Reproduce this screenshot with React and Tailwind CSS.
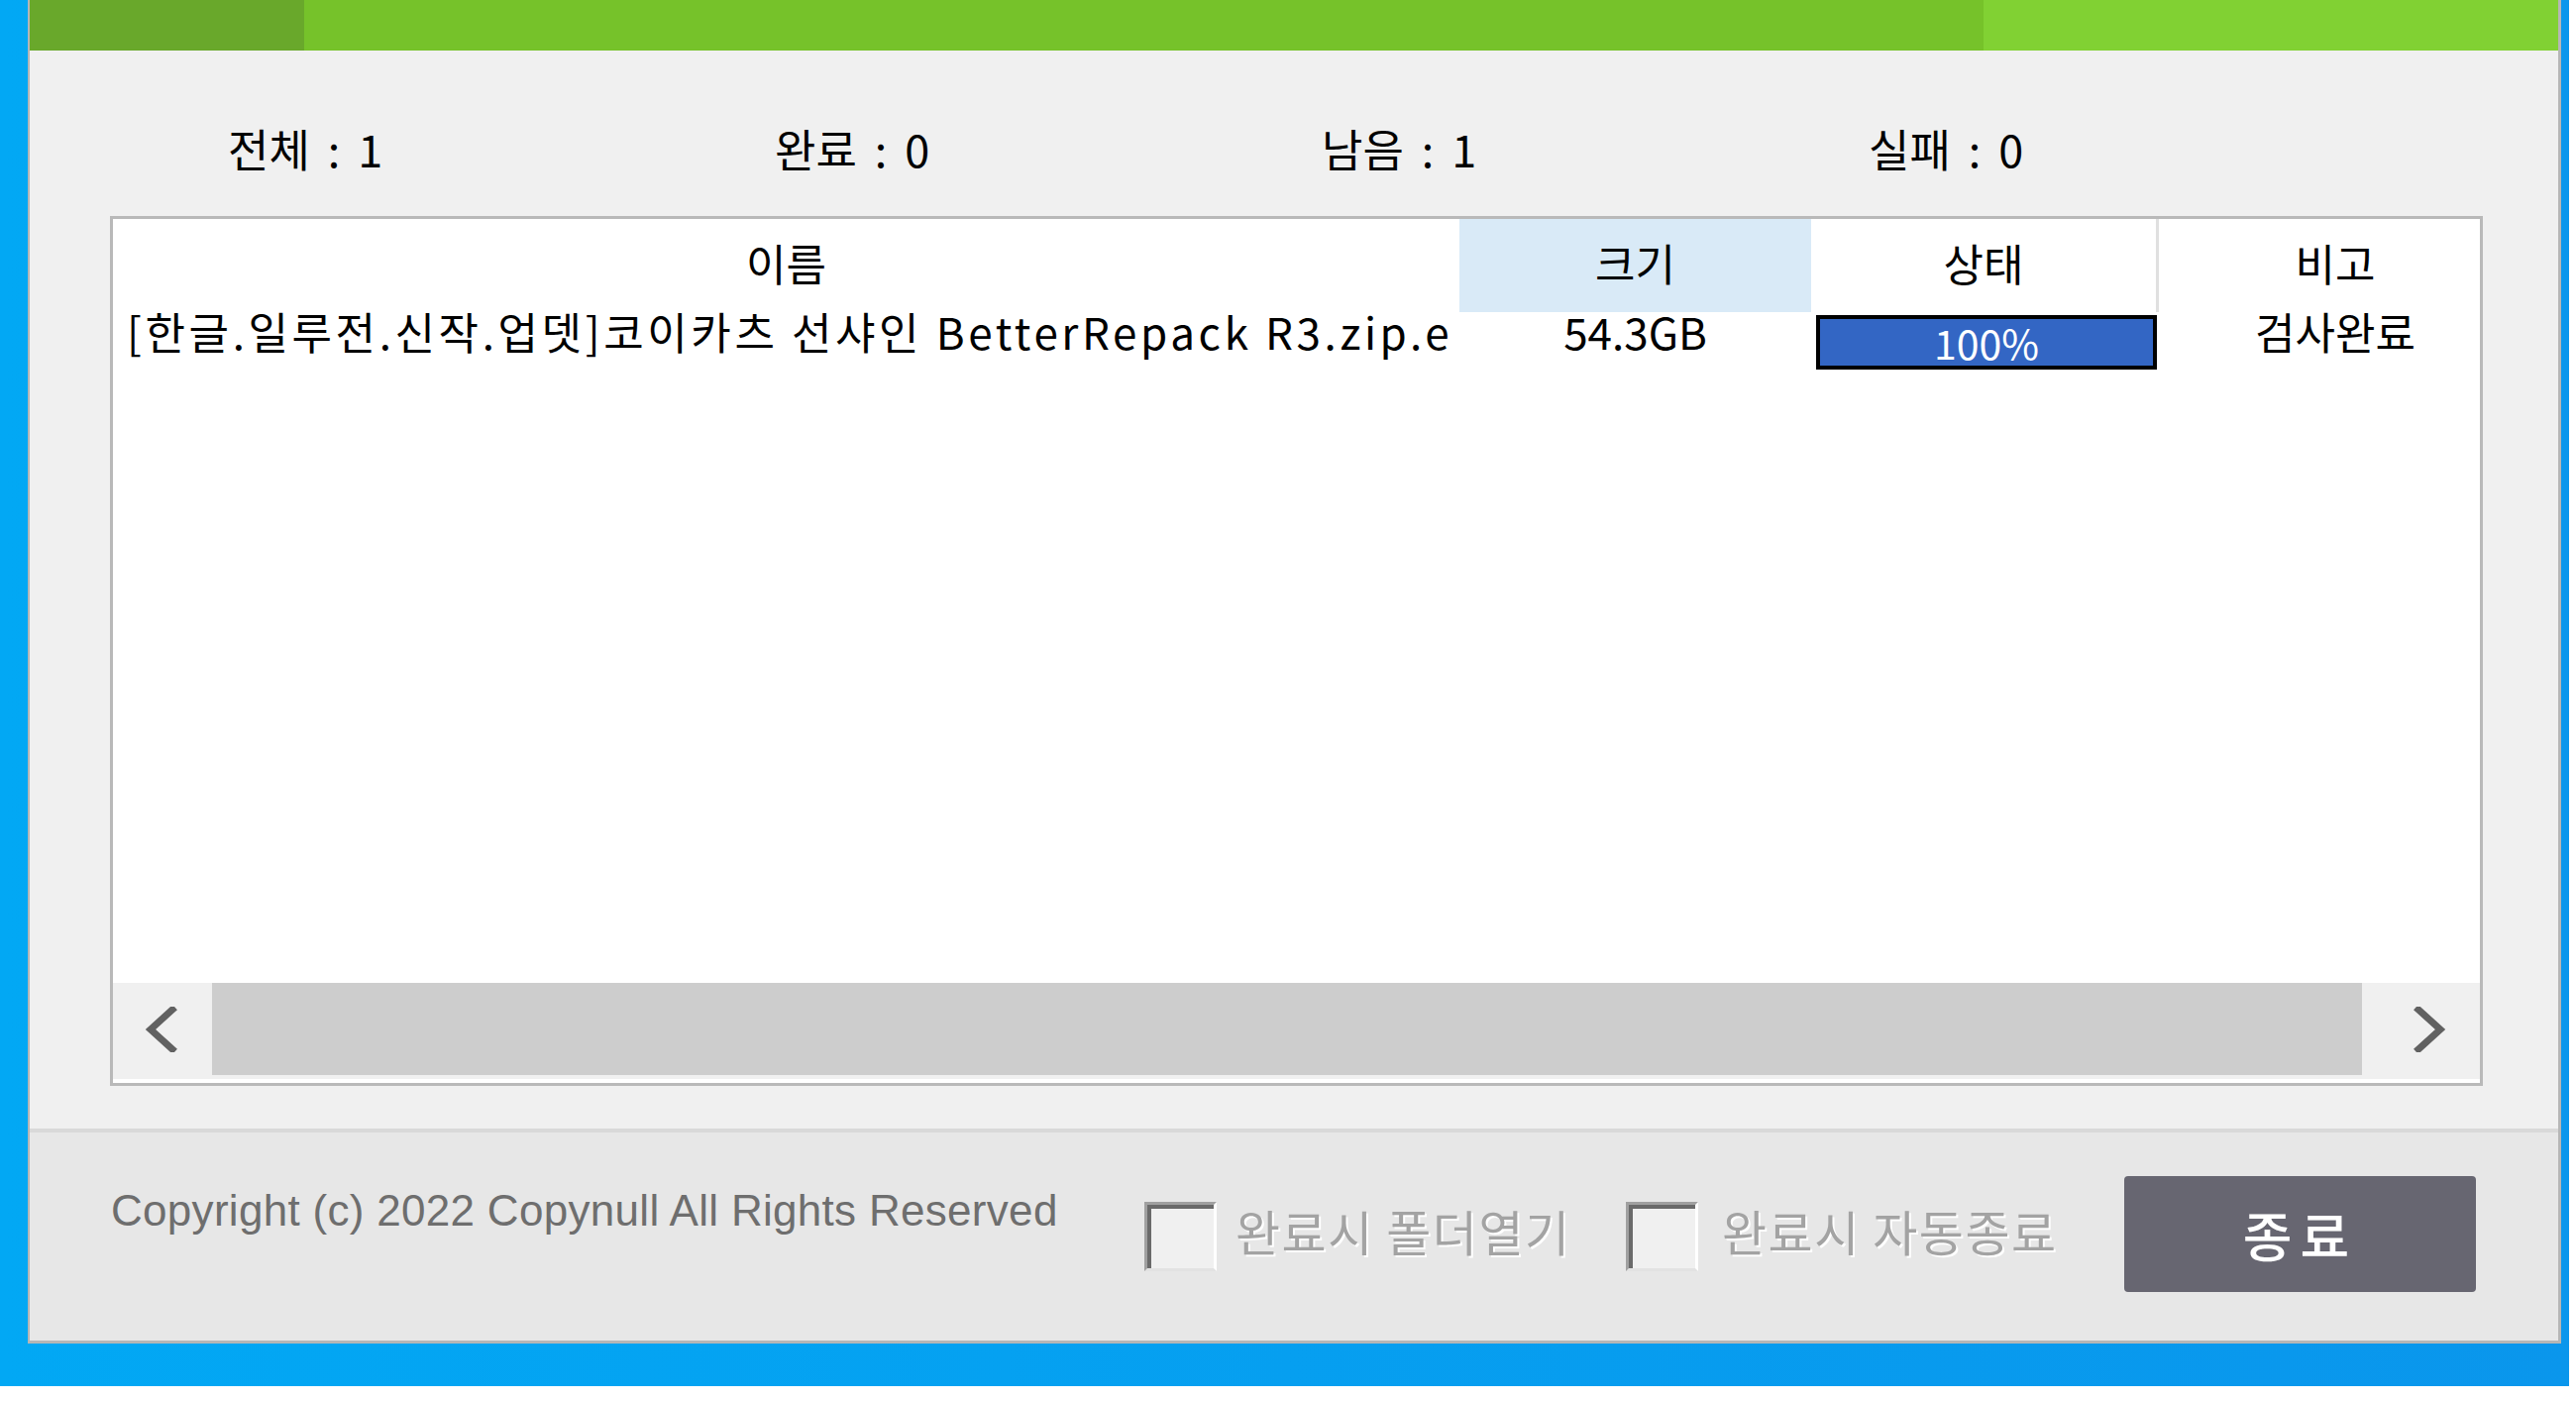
import React from "react";

// Pixel-ish chevron used on the horizontal scrollbar ends
const Chevron = ({ dir }) => (
  <svg width="38" height="46" viewBox="0 0 38 46">
    <polyline
      points={dir === "left" ? "32,3 10,23 32,43" : "6,3 28,23 6,43"}
      fill="none"
      stroke="#616161"
      strokeWidth="7"
      strokeLinecap="square"
    />
  </svg>
);

// Classic sunken checkbox
const CheckBox = () => (
  <div className="w-[73px] h-[70px] border-t-[3px] border-l-[3px] border-t-[#a0a0a0] border-l-[#a0a0a0] border-r-[3px] border-r-white border-b-[3px] border-b-[#e2e2e2]">
    <div className="w-full h-full border-t-[4px] border-l-[4px] border-[#6a6a6a] bg-[#f0f0f0]" />
  </div>
);

const kr = "font-['Noto_Sans_CJK_KR',sans-serif]";

const App = () => {
  const stats = [
    ["전체", 1],
    ["완료", 0],
    ["남음", 1],
    ["실패", 0],
  ];

  return (
    <div className="w-[2600px] h-[1414px] bg-white">
      {/* desktop */}
      <div className="w-[2593px] h-[1399px] pl-[28px] bg-gradient-to-r from-[#02a8f4] to-[#0a96ec]">
        {/* window */}
        <div className="w-[2557px] h-[1356px] flex flex-col border-l-2 border-r-[3px] border-b-[3px] border-[#b6b6b6]">
          {/* green top bar */}
          <div className="flex h-[51px] shrink-0">
            <div className="w-[277px] bg-[#69a82b]" />
            <div className="w-[1695px] bg-[#76c22a]" />
            <div className="flex-1 bg-[#81d133]" />
          </div>

          {/* body */}
          <div className={`h-[1088px] shrink-0 bg-[#f0f0f0] pt-[52px] ${kr}`}>
            <div className="flex h-[100px] items-center pb-[7px] pl-[200px] text-[45px] leading-none text-black">
              {stats.map(([label, n]) => (
                <div key={label} className="w-[552px] flex whitespace-nowrap">
                  <span>{label}</span>
                  <span className="mx-[18px]">:</span>
                  <span>{n}</span>
                </div>
              ))}
            </div>

            {/* file list */}
            <div className="ml-[81px] mt-[15px] w-[2395px] h-[878px] border-[3px] border-[#b9b9b9] bg-white flex flex-col overflow-hidden">
              <div className="flex h-[94px] shrink-0 text-[44px] leading-none text-black">
                <div className="w-[1359px] shrink-0 flex items-center justify-center pb-[6px]">이름</div>
                <div className="w-[355px] shrink-0 flex items-center justify-center pb-[6px] bg-[#d9eaf7]">크기</div>
                <div className="w-[351px] shrink-0 flex items-center justify-center pb-[6px] border-r-[3px] border-[#e0e0e0]">상태</div>
                <div className="w-[356px] shrink-0 flex items-center justify-center pb-[6px]">비고</div>
              </div>

              <div className="flex h-[60px] shrink-0 text-[44px] leading-none text-black">
                <div className="w-[1359px] shrink-0 whitespace-nowrap pl-[14px] -mt-[3px] tracking-[3.6px]">
                  [한글.일루전.신작.업뎃]코이카츠 선샤인 BetterRepack R3.zip.e
                </div>
                <div className="w-[355px] shrink-0 text-center -mt-[3px]">54.3GB</div>
                <div className="w-[351px] shrink-0 pl-[5px] pt-[3px]">
                  <div className="w-[344px] h-[55px] border-4 border-black bg-[#3366c4] flex items-center justify-center text-[41px] text-white">
                    100%
                  </div>
                </div>
                <div className="w-[356px] shrink-0 text-center -mt-[3px]">검사완료</div>
              </div>

              <div className="flex-1" />

              {/* horizontal scrollbar */}
              <div className="flex h-[97px] shrink-0 bg-[#f0f0f0]">
                <div className="w-[100px] shrink-0 flex items-center justify-center pb-[4px] pr-[6px]">
                  <Chevron dir="left" />
                </div>
                <div className="w-[2170px] h-[93px] shrink-0 bg-[#cdcdcd]" />
                <div className="flex-1 flex items-center justify-center pl-[20px] pb-[4px]">
                  <Chevron dir="right" />
                </div>
              </div>
              <div className="h-[4px] shrink-0 bg-white" />
            </div>
          </div>

          {/* footer */}
          <div className="flex-1 bg-[#e7e7e7] border-t-4 border-[#d9d9d9] flex items-center pl-[82px]">
            <div className="w-[1043px] shrink-0 mb-[52px] font-['Liberation_Sans',sans-serif] text-[44px] tracking-[0.3px] text-[#6e6e6e] whitespace-nowrap">
              Copyright (c) 2022 Copynull All Rights Reserved
            </div>
            <CheckBox />
            <div className={`ml-[19px] mb-[14px] w-[394px] shrink-0 ${kr} text-[49px] leading-none tracking-[1.5px] text-[#a3a3a3] [text-shadow:2px_2px_0_#ffffff] whitespace-nowrap`}>
              완료시 폴더열기
            </div>
            <CheckBox />
            <div className={`ml-[24px] mb-[14px] w-[406px] shrink-0 ${kr} text-[49px] leading-none tracking-[1.5px] text-[#a3a3a3] [text-shadow:2px_2px_0_#ffffff] whitespace-nowrap`}>
              완료시 자동종료
            </div>
            <button className={`w-[355px] h-[117px] mb-[6px] rounded-[4px] bg-[#676671] ${kr} text-[54px] font-medium tracking-[8px] text-white flex items-center justify-center`}>
              종료
            </button>
          </div>
        </div>
      </div>
    </div>
  );
};

export default App;
